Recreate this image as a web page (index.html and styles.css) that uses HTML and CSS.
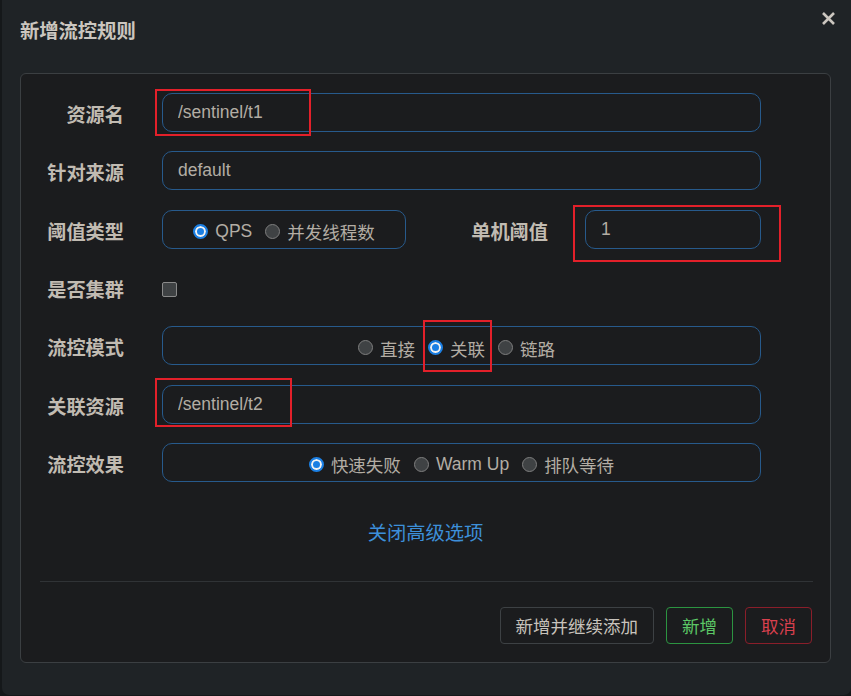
FILE: index.html
```html
<!DOCTYPE html>
<html lang="zh-CN">
<head>
  <meta charset="UTF-8">
  <meta name="viewport" content="width=device-width, initial-scale=1.0">
  <title>新增流控规则</title>
  <link rel="stylesheet" href="styles.css">
</head>
<body>
  <div class="modal">
    <div class="modal-header">
      <h4 class="modal-title">新增流控规则</h4>
      <button class="close" type="button" aria-label="关闭">
        <svg width="13" height="13" viewBox="0 0 13 13">
          <path d="M1 1 L12 12 M12 1 L1 12" stroke="#cbc6bf" stroke-width="2.6" fill="none"/>
        </svg>
      </button>
    </div>

    <div class="panel">
      <form class="rule-form">
        <div class="form-row">
          <label class="control-label">资源名</label>
          <div class="field">
            <input class="form-control" type="text" value="/sentinel/t1">
            <span class="mark mark-resource"></span>
          </div>
        </div>

        <div class="form-row">
          <label class="control-label">针对来源</label>
          <div class="field">
            <input class="form-control" type="text" value="default">
          </div>
        </div>

        <div class="form-row">
          <label class="control-label">阈值类型</label>
          <div class="radio-box radio-box-small">
            <label class="radio"><input type="radio" name="grade" checked> QPS</label>
            <label class="radio"><input type="radio" name="grade"> 并发线程数</label>
          </div>
          <label class="control-label label-count">单机阈值</label>
          <div class="field">
            <input class="form-control" type="text" value="1">
            <span class="mark mark-count"></span>
          </div>
        </div>

        <div class="form-row">
          <label class="control-label">是否集群</label>
          <input class="checkbox" type="checkbox">
        </div>

        <div class="form-row">
          <label class="control-label">流控模式</label>
          <div class="radio-box radio-box-mode">
            <label class="radio"><input type="radio" name="strategy"> 直接</label>
            <label class="radio radio-marked"><input type="radio" name="strategy" checked> 关联<span class="mark mark-mode"></span></label>
            <label class="radio"><input type="radio" name="strategy"> 链路</label>
          </div>
        </div>

        <div class="form-row">
          <label class="control-label">关联资源</label>
          <div class="field">
            <input class="form-control" type="text" value="/sentinel/t2">
            <span class="mark mark-ref"></span>
          </div>
        </div>

        <div class="form-row">
          <label class="control-label">流控效果</label>
          <div class="radio-box">
            <label class="radio"><input type="radio" name="behavior" checked> 快速失败</label>
            <label class="radio"><input type="radio" name="behavior"> Warm Up</label>
            <label class="radio"><input type="radio" name="behavior"> 排队等待</label>
          </div>
        </div>
      </form>

      <div class="advanced"><a href="#">关闭高级选项</a></div>

      <div class="divider"></div>

      <div class="actions">
        <button class="btn btn-default" type="button">新增并继续添加</button>
        <button class="btn btn-success" type="button">新增</button>
        <button class="btn btn-danger" type="button">取消</button>
      </div>
    </div>
  </div>
</body>
</html>
```

FILE: styles.css
```css
body {
  margin: 0;
  padding: 0;
  background-color: #15181a;
  font-family: "Liberation Sans", Arial, "Noto Sans CJK SC", sans-serif;
  font-size: 17.5px;
  color: #b3ada4;
}
.modal {
  margin-left: 2px;
  width: 849px;
  height: 695px;
  background-color: #1f2326;
  border-radius: 0 0 7px 7px;
  box-sizing: border-box;
}
.modal-header {
  display: flex;
  justify-content: space-between;
  align-items: flex-start;
  height: 73px;
  box-sizing: border-box;
  padding: 19px 16px 0 18px;
}
.modal-title {
  margin: 0;
  font-size: 19.3px;
  line-height: 26px;
  font-weight: bold;
  color: #cbc6bf;
}
.close {
  margin-top: -7px;
  padding: 0;
  border: none;
  background: none;
  line-height: 0;
  cursor: pointer;
}
.panel {
  margin: 0 20px 0 18px;
  height: 590px;
  box-sizing: border-box;
  padding: 19px 0 19px;
  background-color: #1b1c1e;
  border: 1px solid #3b3f42;
  border-radius: 6px;
}
.rule-form {
  padding-right: 69px;
}
.form-row {
  display: flex;
  align-items: center;
  height: 39px;
  margin-bottom: 19.33px;
}
.control-label {
  flex: none;
  width: 103px;
  margin-right: 38px;
  text-align: right;
  font-size: 19.2px;
  font-weight: bold;
  color: #c1bbb2;
  padding-top: 3px;
}
.label-count {
  width: 142px;
  margin-right: 37px;
}
.field {
  position: relative;
  flex: 1;
  height: 100%;
}
.form-control {
  width: 100%;
  height: 100%;
  box-sizing: border-box;
  padding: 0 15px;
  font-family: inherit;
  font-size: 17.5px;
  color: #b3ada4;
  background-color: #1b1c1e;
  border: 1px solid #275a8c;
  border-radius: 10px;
  outline: none;
}
.radio-box {
  flex: 1;
  height: 100%;
  box-sizing: border-box;
  display: flex;
  justify-content: center;
  align-items: center;
  border: 1px solid #275a8c;
  border-radius: 10px;
  padding-top: 5px;
}
.radio-box-small {
  flex: none;
  width: 244px;
}
.radio-box-mode {
  padding-right: 10px;
}
.radio {
  display: inline-flex;
  align-items: center;
  gap: 7px;
  margin: 0 6.5px;
  color: #b3ada4;
  white-space: nowrap;
}
.radio-marked {
  position: relative;
}
.radio input {
  appearance: none;
  -webkit-appearance: none;
  margin: 0 0 1px 0;
  width: 15px;
  height: 15px;
  border-radius: 50%;
  background-color: #3f4244;
  border: 1px solid #7e7e7e;
  box-sizing: border-box;
}
.radio input:checked {
  background-color: #1b7fe3;
  border: 2px solid #1b7fe3;
  box-shadow: inset 0 0 0 2px #f2f2f2;
}
.checkbox {
  appearance: none;
  -webkit-appearance: none;
  margin: 0;
  width: 15px;
  height: 15px;
  box-sizing: border-box;
  border-radius: 2px;
  background-color: #3f4244;
  border: 1px solid #8a8a8a;
  position: relative;
  top: 2px;
}
.mark {
  position: absolute;
  border: 2px solid #e3202a;
  pointer-events: none;
}
.mark-resource {
  left: -7px;
  top: -4px;
  width: 152px;
  height: 43px;
}
.mark-count {
  left: -12px;
  top: -5px;
  width: 204px;
  height: 53px;
}
.mark-ref {
  left: -7px;
  top: -7px;
  width: 133px;
  height: 45px;
}
.mark-mode {
  left: -5px;
  top: -16px;
  width: 65px;
  height: 48px;
}
.advanced {
  margin-top: 40px;
  text-align: center;
  line-height: 24px;
  font-size: 19.3px;
}
.advanced a {
  color: #3d8fd9;
  text-decoration: none;
}
.divider {
  margin: 35px 17px 0 19px;
  height: 1px;
  background-color: #303336;
}
.actions {
  display: flex;
  justify-content: flex-end;
  gap: 12px;
  margin-top: 25px;
  padding-right: 18px;
}
.btn {
  height: 37px;
  padding: 0 15px;
  font-family: inherit;
  font-size: 17.5px;
  background-color: transparent;
  border: 1px solid #3d4144;
  border-radius: 4px;
  cursor: pointer;
}
.btn-default {
  color: #c8c3bc;
}
.btn-success {
  color: #5cc766;
  border-color: #2c9441;
}
.btn-danger {
  color: #d8404e;
  border-color: #8a1e2a;
}
```
